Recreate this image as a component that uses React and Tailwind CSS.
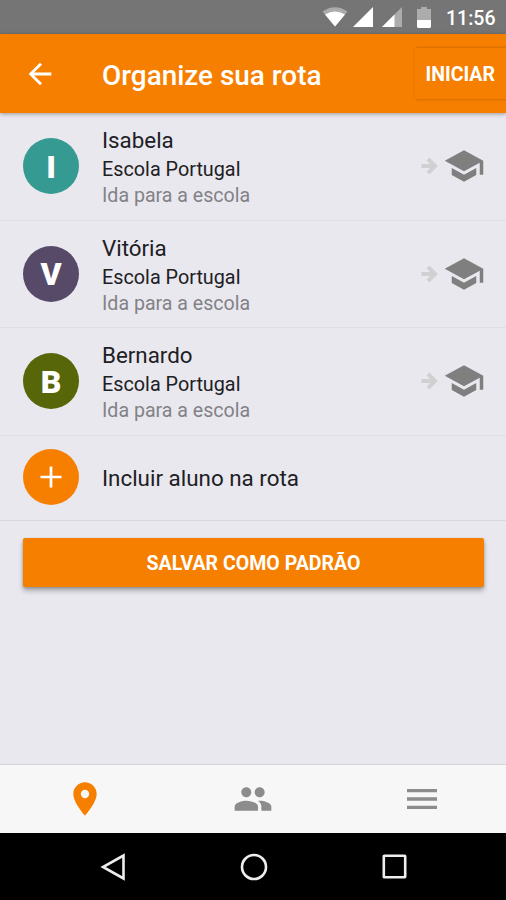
const students = [
  { name: 'Isabela', initial: 'I', color: 'bg-[#359a91]' },
  { name: 'Vitória', initial: 'V', color: 'bg-[#564a68]' },
  { name: 'Bernardo', initial: 'B', color: 'bg-[#566608]' },
];

function Icon({ d, className }) {
  return (
    <svg viewBox="0 0 24 24" fill="currentColor" className={className}>
      <path d={d} />
    </svg>
  );
}

const paths = {
  back: 'M20 11H7.83l5.59-5.59L12 4l-8 8 8 8 1.41-1.41L7.83 13H20v-2z',
  school: 'M5 13.18v4L12 21l7-3.82v-4L12 17l-7-3.82zM12 3L1 9l11 6 9-4.91V17h2V9L12 3z',
  plus: 'M19 12.9h-6.1V19h-1.8v-6.1H5v-1.8h6.1V5h1.8v6.1H19z',
  place: 'M12 2C8.13 2 5 5.13 5 9c0 5.25 7 13 7 13s7-7.75 7-13c0-3.87-3.13-7-7-7zm0 9.5a2.5 2.5 0 0 1 0-5 2.5 2.5 0 0 1 0 5z',
  people:
    'M16 11c1.66 0 2.99-1.34 2.99-3S17.66 5 16 5s-3 1.34-3 3 1.34 3 3 3zm-8 0c1.66 0 2.99-1.34 2.99-3S9.66 5 8 5 5 6.34 5 8s1.34 3 3 3zm0 2c-2.33 0-7 1.17-7 3.5V19h14v-2.5c0-2.33-4.67-3.5-7-3.5zm8 0c-.29 0-.62.02-.97.05 1.16.84 1.97 1.97 1.97 3.45V19h6v-2.5c0-2.33-4.67-3.5-7-3.5z',
  menu: 'M3 18h18v-2H3v2zm0-5h18v-2H3v2zm0-7v2h18V6H3z',
};

function StatusBar() {
  return (
    <div className="flex h-[34px] items-center justify-end bg-[#757575] pr-[11px]">
      <svg width="26" height="20" viewBox="0 0 26 20" className="mr-[5px]">
        <path d="M0.5 4.5Q13-4 25.500 4.500L13 19.500z" fill="#acacac" />
        <path d="M3 7.500Q13 1.500 23 7.500L13 19.500z" fill="#fff" />
      </svg>
      <svg width="20" height="20" viewBox="0 0 20 20" className="mr-[9px]">
        <path d="M20 0v20H0z" fill="#fff" />
      </svg>
      <svg width="20" height="20" viewBox="0 0 20 20" className="mr-[15px]">
        <path d="M20 0v20H0z" fill="#acacac" />
        <path d="M12.500 7.500V20H0z" fill="#fff" />
      </svg>
      <svg width="14" height="21" viewBox="0 0 14 21" className="mr-[15px]">
        <path d="M4 0h6v2h4v11H0V2h4z" fill="#acacac" />
        <path d="M0 13h14v6.500a1.500 1.500 0 0 1-1.500 1.500h-11A1.500 1.500 0 0 1 0 19.500z" fill="#fff" />
      </svg>
      <span className="w-[49px] pt-[3px] text-[19.500px] font-medium leading-none whitespace-nowrap">11:56</span>
    </div>
  );
}

function Header() {
  return (
    <header className="relative flex h-[79px] items-center bg-[#f77f00] shadow-[0_1px_4px_rgba(0,0,0,0.35)]">
      <Icon d={paths.back} className="ml-[23px] size-[34px]" />
      <h1 className="ml-[45px] flex-1 pt-1 text-[27.900px] font-medium leading-8 whitespace-nowrap">Organize sua rota</h1>
      <div className="-mr-1 h-[51px] w-[95px] bg-[#f77f00] pl-[10.500px] text-[19.500px] font-bold leading-[53px] shadow-[1px_0_3px_rgba(0,0,0,0.25)]">
        INICIAR
      </div>
    </header>
  );
}

function StudentRow({ name, initial, color }) {
  return (
    <li className="flex h-[107.500px] items-center border-b border-[#dfdee4] pl-[23px] pr-[21.500px]">
      <div className={`flex size-14 items-center justify-center rounded-full pt-px text-[32px] font-black leading-none text-white ${color}`}>
        {initial}
      </div>
      <div className="ml-[23px] flex-1 pt-[3px] whitespace-nowrap">
        <div className="text-[22.350px] leading-[29px] text-[#202024]">{name}</div>
        <div className="pt-px text-[19.800px] leading-[27px] text-[#202024]">Escola Portugal</div>
        <div className="text-[19.600px] leading-[26px] text-[#828286]">Ida para a escola</div>
      </div>
      <svg width="17" height="18" viewBox="0 0 17 18" fill="none" stroke="#d0d0d3" strokeWidth="4" className="mr-[5px]">
        <path d="M0.500 9H13M7 2l7 7-7 7" />
      </svg>
      <Icon d={paths.school} className="size-[42px] text-[#7f7f80]" />
    </li>
  );
}

export default function App() {
  return (
    <div className="flex h-[900px] w-[506px] flex-col overflow-hidden bg-[#e9e8ee] font-[Roboto,sans-serif] text-white">
      <StatusBar />
      <Header />
      <main className="flex-1">
        <ul>
          {students.map((s) => (
            <StudentRow key={s.name} {...s} />
          ))}
          <li className="flex h-[85px] items-center border-b border-[#d8d7dd] pb-0.5 pl-[23px]">
            <div className="flex size-14 items-center justify-center rounded-full bg-[#f77f00]">
              <Icon d={paths.plus} className="size-9" />
            </div>
            <span className="ml-[23px] pt-[2px] text-[22.400px] leading-7 text-[#202024]">Incluir aluno na rota</span>
          </li>
        </ul>
        <button className="mx-[23px] mt-[17px] block h-[49px] w-[461px] rounded-[2px] bg-[#f77f00] pt-[3px] text-[19.550px] font-bold shadow-[0_4px_5px_rgba(0,0,0,0.25),0_1px_3px_rgba(0,0,0,0.2)]">
          SALVAR COMO PADRÃO
        </button>
      </main>
      <nav className="grid h-[69px] grid-cols-3 items-center justify-items-center border-t border-[#d4d4d7] bg-[#f7f7f7] pl-px text-[#8c8c8c]">
        <Icon d={paths.place} className="size-10 text-[#f77f00]" />
        <Icon d={paths.people} className="size-10" />
        <Icon d={paths.menu} className="size-10" />
      </nav>
      <div className="flex h-[67px] items-center justify-between bg-black pl-[100px] pr-[99.500px]">
        <svg width="26" height="28" viewBox="0 0 26 28" fill="none" stroke="#eee" strokeWidth="2.600">
          <path d="M23.500 2.500v23L3 14z" />
        </svg>
        <svg width="28" height="28" viewBox="0 0 28 28" fill="none" stroke="#eee" strokeWidth="2.600">
          <circle cx="14" cy="14" r="12" />
        </svg>
        <svg width="25" height="25" viewBox="0 0 25 25" fill="none" stroke="#eee" strokeWidth="2.600">
          <rect x="1.800" y="1.800" width="21.400" height="21.400" rx="0.500" />
        </svg>
      </div>
    </div>
  );
}
